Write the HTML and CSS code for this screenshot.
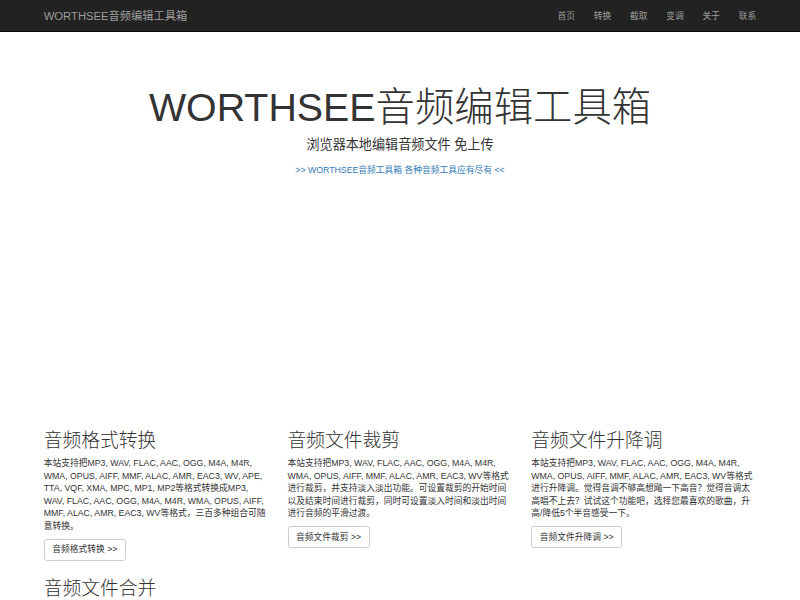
FILE: index.html
```html
<!DOCTYPE html>
<html lang="zh-CN">
<head>
<meta charset="utf-8">
<title>WORTHSEE音频编辑工具箱</title>
<link rel="stylesheet" href="styles.css">
</head>
<body>
<nav class="navbar">
  <div class="container nav-inner">
    <a class="brand" href="#">WORTHSEE音频编辑工具箱</a>
    <ul class="nav">
      <li><a href="#">首页</a></li>
      <li><a href="#">转换</a></li>
      <li><a href="#">截取</a></li>
      <li><a href="#">变调</a></li>
      <li><a href="#">关于</a></li>
      <li><a href="#">联系</a></li>
    </ul>
  </div>
</nav>
<div class="jumbotron">
  <div class="container">
    <h1>WORTHSEE音频编辑工具箱</h1>
    <p class="lead">浏览器本地编辑音频文件 免上传</p>
    <p class="promo"><a href="#">&gt;&gt; WORTHSEE音频工具箱 各种音频工具应有尽有 &lt;&lt;</a></p>
  </div>
</div>
<div class="container">
  <div class="ad-space"></div>
  <div class="row">
    <div class="col">
      <h2>音频格式转换</h2>
      <p>本站支持把MP3, WAV, FLAC, AAC, OGG, M4A, M4R, WMA, OPUS, AIFF, MMF, ALAC, AMR, EAC3, WV, APE, TTA, VQF, XMA, MPC, MP1, MP2等格式转换成MP3, WAV, FLAC, AAC, OGG, M4A, M4R, WMA, OPUS, AIFF, MMF, ALAC, AMR, EAC3, WV等格式，三百多种组合可随意转换。</p>
      <p><a class="btn" href="#">音频格式转换 &gt;&gt;</a></p>
    </div>
    <div class="col">
      <h2>音频文件裁剪</h2>
      <p>本站支持把MP3, WAV, FLAC, AAC, OGG, M4A, M4R, WMA, OPUS, AIFF, MMF, ALAC, AMR, EAC3, WV等格式进行裁剪，并支持淡入淡出功能。可设置裁剪的开始时间以及结束时间进行裁剪，同时可设置淡入时间和淡出时间进行音频的平滑过渡。</p>
      <p><a class="btn" href="#">音频文件裁剪 &gt;&gt;</a></p>
    </div>
    <div class="col">
      <h2>音频文件升降调</h2>
      <p>本站支持把MP3, WAV, FLAC, AAC, OGG, M4A, M4R, WMA, OPUS, AIFF, MMF, ALAC, AMR, EAC3, WV等格式进行升降调。觉得音调不够高想飚一下高音？觉得音调太高唱不上去？试试这个功能吧，选择您最喜欢的歌曲，升高/降低5个半音感受一下。</p>
      <p><a class="btn" href="#">音频文件升降调 &gt;&gt;</a></p>
    </div>
  </div>
  <div class="row">
    <div class="col">
      <h2>音频文件合并</h2>
      <p>本站支持把MP3, WAV, FLAC, AAC, OGG, M4A, M4R, WMA, OPUS, AIFF, MMF, ALAC, AMR, EAC3, WV等格式进行合并。</p>
    </div>
  </div>
</div>
</body>
</html>
```
FILE: styles.css
```css
* { box-sizing: border-box; }
html, body { margin: 0; padding: 0; }
body {
  font-family: "Liberation Sans", "Noto Sans CJK SC", sans-serif;
  font-size: 8.75px;
  line-height: 12.5px;
  color: #333;
  background: #fff;
}
a { text-decoration: none; color: #337ab7; }
.container {
  width: 731.25px;
  margin: 0 auto;
  padding: 0 9.375px;
}
.navbar {
  background: #222;
  border-bottom: 1px solid #080808;
  height: 32px;
  margin-bottom: 11.75px;
}
.nav-inner {
  display: flex;
  justify-content: space-between;
  align-items: flex-start;
}
.brand {
  color: #9d9d9d;
  font-size: 11.25px;
  line-height: 12.5px;
  padding: 9.75px 0 9px;
  height: 31.25px;
}
.nav {
  display: flex;
  list-style: none;
  margin: 0 -9.375px 0 0;
  padding: 0;
}
.nav a {
  display: block;
  color: #9d9d9d;
  padding: 9.75px 9.375px 9px;
  line-height: 12.5px;
}
.jumbotron {
  padding: 30px 0;
  margin-bottom: 18.75px;
  text-align: center;
}
.jumbotron h1 {
  font-size: 39.375px;
  line-height: 1.1;
  font-weight: 300;
  margin: 12.5px 0 6.25px;
}
.jumbotron .lead {
  font-size: 13.125px;
  line-height: 18.75px;
  font-weight: 400;
  margin: 0 0 9.375px;
}
.jumbotron .promo {
  margin: 0 0 9.375px;
}
.ad-space { height: 183.5px; }
.row {
  display: grid;
  grid-template-columns: repeat(3, 1fr);
  margin: 0 -9.375px;
}
.col { padding: 0 9.375px; }
.col h2 {
  font-size: 18.75px;
  line-height: 1.1;
  font-weight: 300;
  margin: 12.5px 0 6.25px;
}
.col p { margin: 0 0 6.25px; }
.btn {
  display: inline-block;
  color: #333;
  background: #fff;
  border: 1px solid #ccc;
  border-radius: 2.5px;
  padding: 3.75px 7.5px;
  line-height: 12.5px;
  font-size: 8.75px;
}
```
